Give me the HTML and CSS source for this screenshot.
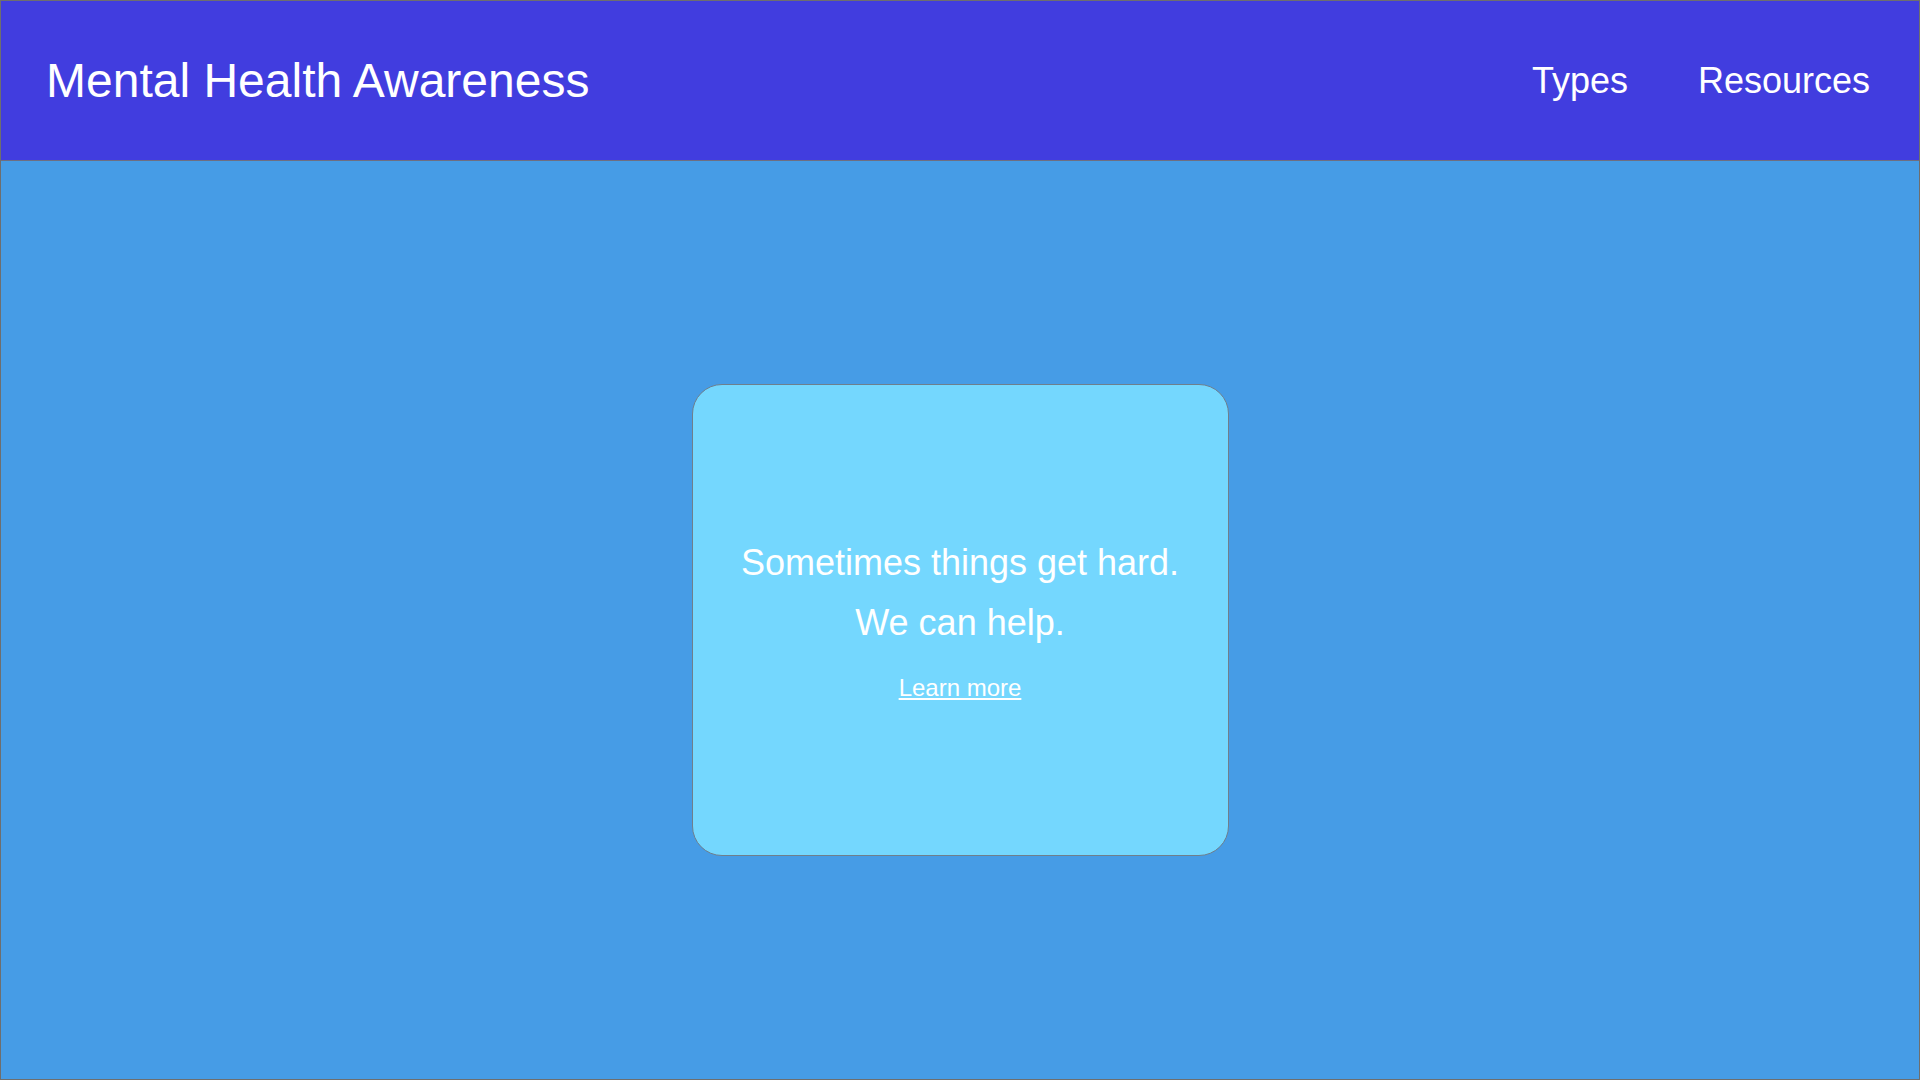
FILE: index.html
```html
<!DOCTYPE html>
<html lang="en">
<head>
<meta charset="utf-8">
<title>Mental Health Awareness</title>
<link rel="stylesheet" href="styles.css">
</head>
<body>
<div class="page">
  <header class="header">
    <h1 class="title">Mental Health Awareness</h1>
    <nav class="nav">
      <a class="nav-link" href="#">Types</a>
      <a class="nav-link" href="#">Resources</a>
    </nav>
  </header>
  <main class="main">
    <section class="card">
      <p class="card-line">Sometimes things get hard.</p>
      <p class="card-line">We can help.</p>
      <a class="card-link" href="#">Learn more</a>
    </section>
  </main>
</div>
</body>
</html>
```
FILE: styles.css
```css
html, body {
  margin: 0;
  padding: 0;
}
body {
  font-family: "Liberation Sans", Arial, sans-serif;
  color: #ffffff;
}
.page {
  width: 1920px;
  height: 1080px;
  box-sizing: border-box;
  border: 1px solid #6e6e6e;
  display: flex;
  flex-direction: column;
  background: #469ce6;
}
.header {
  height: 160px;
  box-sizing: border-box;
  flex: 0 0 auto;
  background: #413ddf;
  border-bottom: 1px solid #6e6e80;
  display: flex;
  align-items: center;
  justify-content: space-between;
  padding: 0 49px 0 45px;
}
.title {
  margin: 0;
  font-size: 48px;
  font-weight: normal;
  line-height: 1;
}
.nav {
  display: flex;
  gap: 70px;
}
.nav-link {
  color: #ffffff;
  text-decoration: none;
  font-size: 36px;
  line-height: 1;
}
.main {
  flex: 1 1 auto;
  display: flex;
  align-items: center;
  justify-content: center;
}
.card {
  width: 537px;
  height: 472px;
  box-sizing: border-box;
  background: #74d7fe;
  border: 1px solid #6f7f8c;
  border-radius: 30px;
  display: flex;
  flex-direction: column;
  align-items: center;
  justify-content: center;
  padding-bottom: 6px;
}
.card-line {
  margin: 0;
  font-size: 36px;
  line-height: 60px;
}
.card-link {
  margin-top: 21px;
  color: #ffffff;
  font-size: 24px;
  line-height: 28px;
  text-decoration: underline;
}
```
